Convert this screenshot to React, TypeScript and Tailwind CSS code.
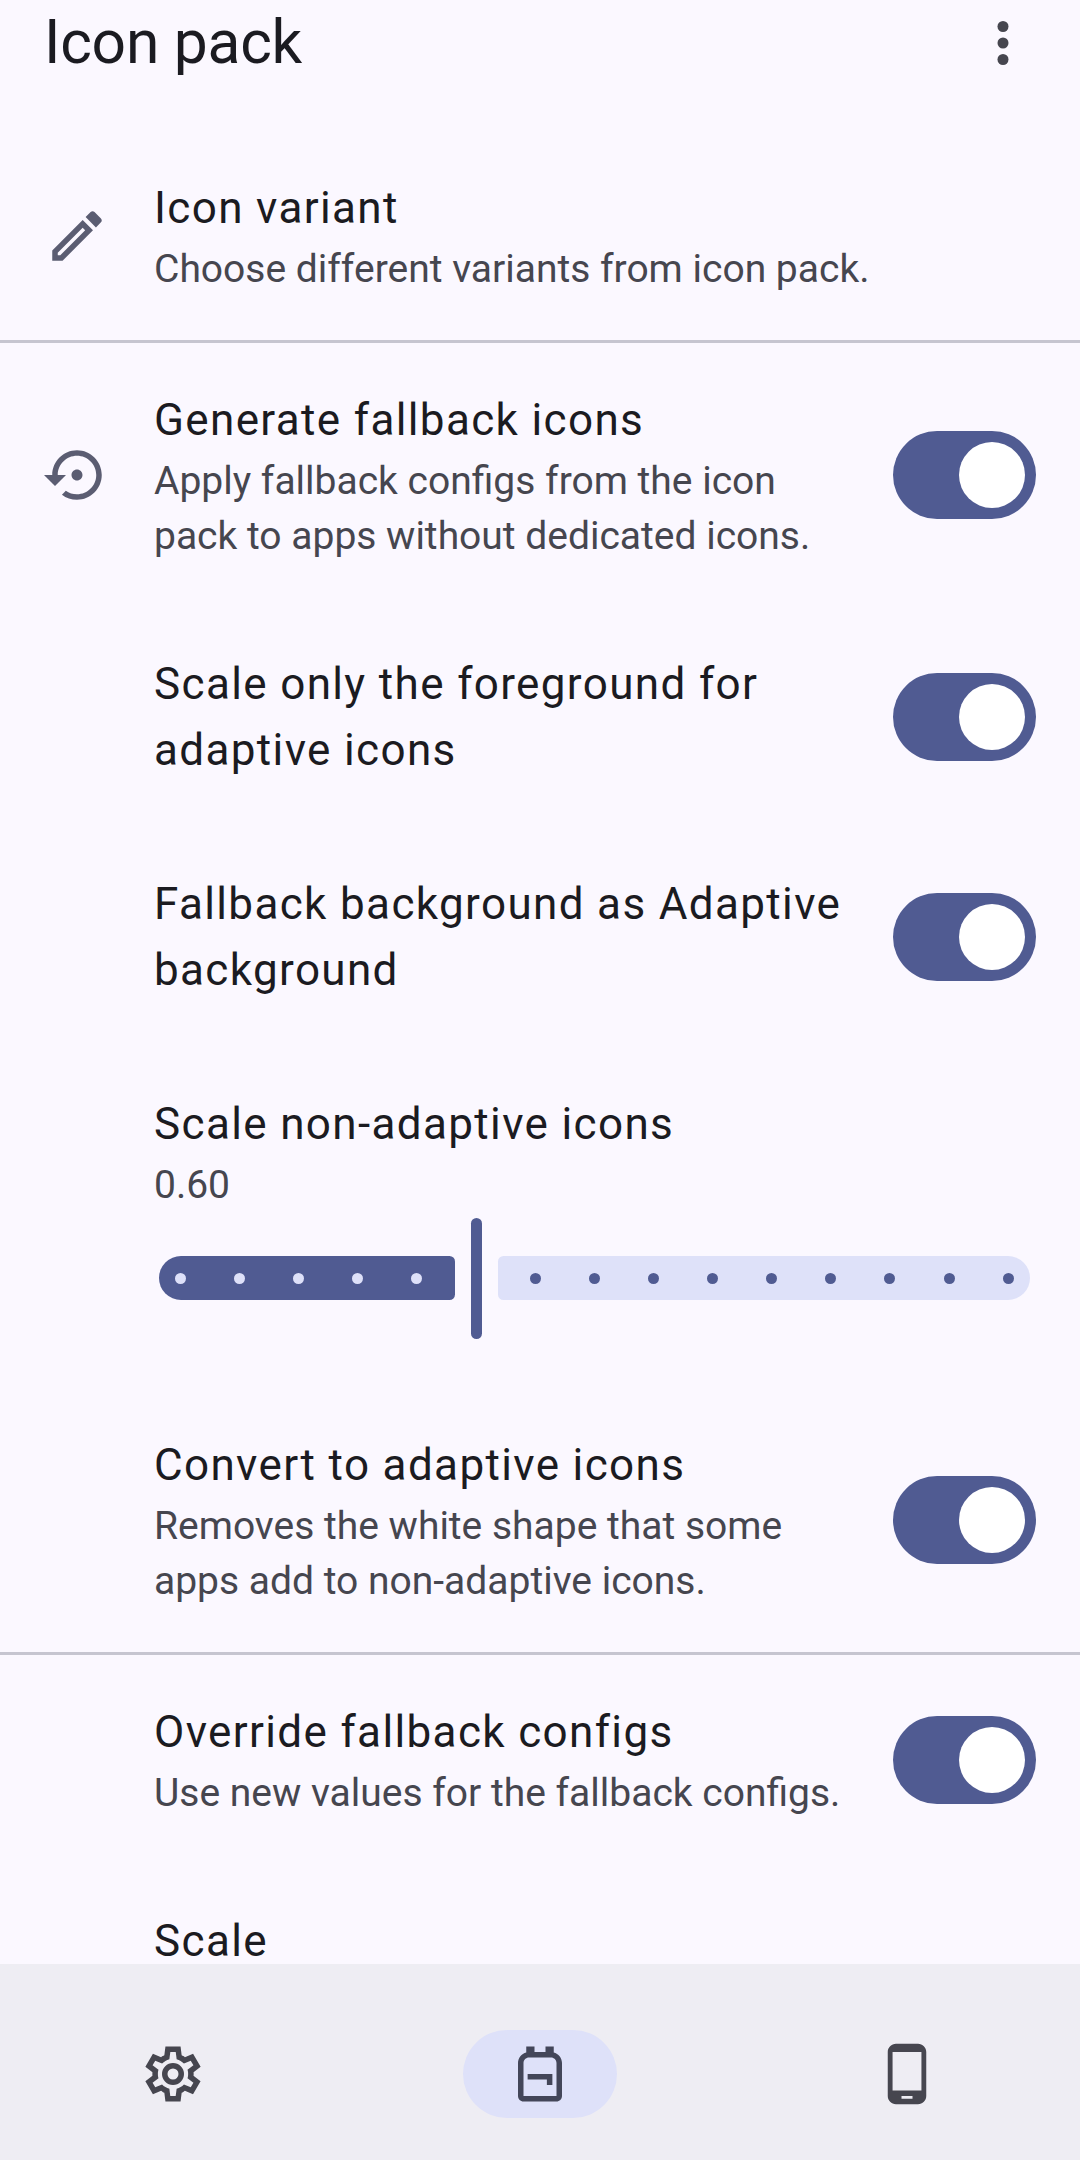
import type { ReactNode } from "react";

function Icon({ children }: { children: ReactNode }) {
  return (
    <svg viewBox="0 0 24 24" fill="currentColor" className="size-[66px] shrink-0">
      {children}
    </svg>
  );
}

const EditIcon = () => (
  <Icon>
    <path d="M14.06 9.02l.92.92L5.92 19H5v-.92l9.06-9.06M17.66 3c-.25 0-.51.1-.7.29l-1.83 1.83 3.75 3.75 1.83-1.83c.39-.39.39-1.02 0-1.41l-2.34-2.34c-.2-.2-.45-.29-.71-.29zm-3.6 3.19L3 17.25V21h3.75L17.81 9.94l-3.75-3.75z" />
  </Icon>
);

const RestoreIcon = () => (
  <Icon>
    <path d="M14 12c0-1.1-.9-2-2-2s-2 .9-2 2 .9 2 2 2 2-.9 2-2zm-2-9c-4.97 0-9 4.03-9 9H0l4 4 4-4H5c0-3.87 3.13-7 7-7s7 3.13 7 7-3.13 7-7 7c-1.51 0-2.91-.49-4.06-1.3l-1.42 1.44C8.04 20.3 9.94 21 12 21c4.97 0 9-4.03 9-9s-4.03-9-9-9z" />
  </Icon>
);

const MoreIcon = () => (
  <Icon>
    <circle cx="12" cy="6" r="2" />
    <circle cx="12" cy="12" r="2" />
    <circle cx="12" cy="18" r="2" />
  </Icon>
);

const SettingsIcon = () => (
  <Icon>
    <path
      transform="translate(0 24) scale(0.025)"
      d="m370-80-16-128q-13-5-24.5-12T307-235l-119 50L78-375l103-78q-1-7-1-13.5v-27q0-6.5 1-13.5L78-585l110-190 119 50q11-8 23-15t24-12l16-128h220l16 128q13 5 24.5 12t22.5 15l119-50 110 190-103 78q1 7 1 13.5v27q0 6.5-2 13.5l103 78-110 190-118-50q-11 8-23 15t-24 12L590-80H370Zm70-80h79l14-106q31-8 57.5-23.5T639-327l99 41 39-68-86-65q5-14 7-29.5t2-31.5q0-16-2-31.5t-7-29.5l86-65-39-68-99 42q-22-23-48.5-38.5T533-694l-13-106h-79l-14 106q-31 8-57.5 23.5T321-633l-99-41-39 68 86 64q-5 15-7 30t-2 32q0 16 2 31t7 30l-86 65 39 68 99-42q22 23 48.5 38.5T427-266l13 106Z"
    />
    <circle cx="12" cy="12" r="3" fill="none" stroke="currentColor" strokeWidth="2" />
  </Icon>
);

const BackpackIcon = () => (
  <Icon>
    <path
      fillRule="evenodd"
      d="M17 4.14V2h-3v2h-4V2H7v2.14C5.28 4.59 4 6.14 4 8v12c0 1.1.9 2 2 2h12c1.1 0 2-.9 2-2V8c0-1.86-1.28-3.41-3-3.86zM18 20H6V8c0-1.1.9-2 2-2h8c1.1 0 2 .9 2 2v12zM16.5 12v4h-2v-2h-7v-2h9z"
    />
  </Icon>
);

const PhoneIcon = () => (
  <Icon>
    <path
      fillRule="evenodd"
      d="M16 1H8C6.34 1 5 2.34 5 4v16c0 1.66 1.34 3 3 3h8c1.66 0 3-1.34 3-3V4c0-1.66-1.34-3-3-3zm-2 20h-4v-1h4v1zm3.25-3H6.75V4h10.5v14z"
    />
  </Icon>
);

function Switch() {
  return (
    <div className="flex h-[88px] w-[143px] shrink-0 items-center justify-end rounded-full bg-[#505b92] p-[11px]">
      <div className="size-[66px] rounded-full bg-white" />
    </div>
  );
}

function Row({
  title,
  summary,
  icon,
  toggle,
  children,
}: {
  title: string;
  summary?: string;
  icon?: ReactNode;
  toggle?: boolean;
  children?: ReactNode;
}) {
  return (
    <div className="flex items-center gap-[44px] p-[44px]">
      <div className="w-[66px] shrink-0 text-[#5b5d72]">{icon}</div>
      <div className="min-w-0 flex-1">
        <div className="text-[44px] leading-[66px] tracking-[1.36px] text-[#1b1b21]">{title}</div>
        {summary && <div className="-mb-px pt-px text-[39px] leading-[55px] text-[#46464f]">{summary}</div>}
        {children}
      </div>
      {toggle && <Switch />}
    </div>
  );
}

const Divider = () => <div className="h-[3px] bg-[#c6c5d0]" />;

function Ticks({ count, className }: { count: number; className: string }) {
  return (
    <>
      {Array.from({ length: count }, (_, i) => (
        <span key={i} className={"size-[11px] shrink-0 rounded-full " + className} />
      ))}
    </>
  );
}

function Slider() {
  return (
    <div className="flex h-[132px] items-center gap-[16.25px] pr-[5.75px] pl-[5px]">
      <div className="flex h-[44px] w-[295.75px] shrink-0 items-center gap-[48.07px] rounded-l-[22px] rounded-r-[5.5px] bg-[#505b92] pl-[16.2px]">
        <Ticks count={5} className="bg-[#dee1f9]" />
      </div>
      <div className="h-[121px] w-[11px] shrink-0 rounded-full bg-[#505b92]" />
      <div className="flex h-[44px] flex-1 items-center justify-end gap-[48.07px] rounded-l-[5.5px] rounded-r-[22px] bg-[#dee1f9] pr-[16.7px]">
        <Ticks count={9} className="bg-[#505b92]" />
      </div>
    </div>
  );
}

export default function App() {
  return (
    <div className="flex h-[2160px] w-[1080px] flex-col overflow-hidden bg-[#fbf8ff] font-[Roboto,sans-serif]">
      <header className="flex h-[131px] shrink-0 items-start justify-between px-[44px]">
        <h1 className="pt-[4px] text-[60.5px] leading-[77px] tracking-[-0.25px] text-[#1b1b21]">Icon pack</h1>
        <div className="pt-[10px] text-[#46464f]">
          <MoreIcon />
        </div>
      </header>
      <main className="min-h-0 flex-1 overflow-hidden">
        <Row title="Icon variant" summary="Choose different variants from icon pack." icon={<EditIcon />} />
        <Divider />
        <Row
          title="Generate fallback icons"
          summary="Apply fallback configs from the icon pack to apps without dedicated icons."
          icon={<RestoreIcon />}
          toggle
        />
        <Row title="Scale only the foreground for adaptive icons" toggle />
        <Row title="Fallback background as Adaptive background" toggle />
        <Row title="Scale non-adaptive icons" summary="0.60">
          <Slider />
        </Row>
        <Row
          title="Convert to adaptive icons"
          summary="Removes the white shape that some apps add to non-adaptive icons."
          toggle
        />
        <Divider />
        <Row title="Override fallback configs" summary="Use new values for the fallback configs." toggle />
        <Row title="Scale" />
      </main>
      <nav className="flex h-[196px] shrink-0 gap-[22px] bg-[#eeedf3] pt-[66px] text-[#46464f]">
        <div className="flex h-[88px] flex-1 items-center justify-center">
          <SettingsIcon />
        </div>
        <div className="flex h-[88px] flex-1 justify-center text-[#434659]">
          <div className="flex h-full w-[154px] items-center justify-center rounded-full bg-[#dee1f9]">
            <BackpackIcon />
          </div>
        </div>
        <div className="flex h-[88px] flex-1 items-center justify-center">
          <PhoneIcon />
        </div>
      </nav>
    </div>
  );
}
